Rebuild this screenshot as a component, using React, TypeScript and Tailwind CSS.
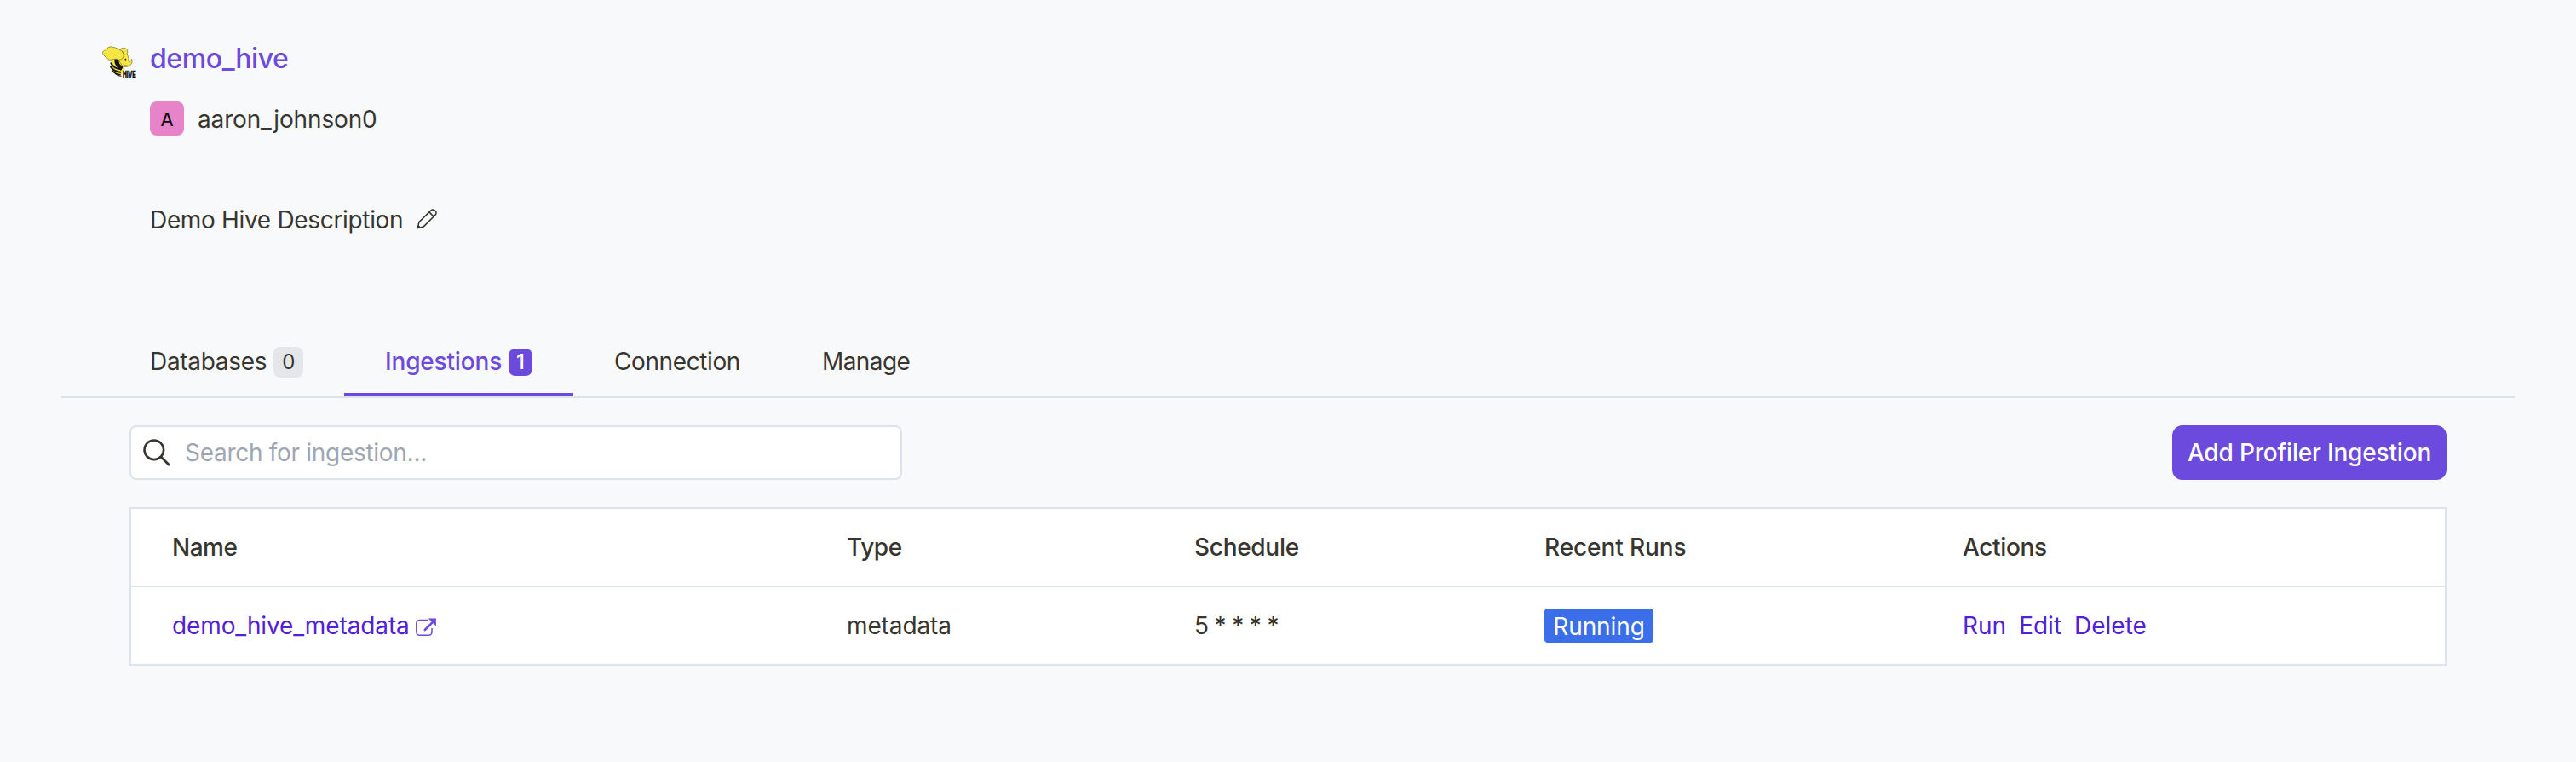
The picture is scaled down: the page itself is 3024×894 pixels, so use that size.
import React from "react";

function HiveLogo() {
  return (
    <svg viewBox="0 0 120 120" className="block h-10 w-10 overflow-visible" aria-hidden="true">
      <path d="M30 62C30 84 44 100 66 104L76 82 60 48 36 46C31 50 30 56 30 62Z" fill="#f5e642" />
      <g fill="none" stroke="#17160f" strokeLinecap="round">
        <path d="M31 61c7 13 18 20 35 21" strokeWidth="6" />
        <path d="M30 73c8 12 18 18 34 19" strokeWidth="6" />
        <path d="M35 86c7 9 16 14 28 15" strokeWidth="5" />
        <path d="M46 98c6 5 12 7 20 8" strokeWidth="3" />
      </g>
      <path d="M44 44 60 46c-4 12 2 22 14 28l-8 12C50 74 40 62 44 44Z" fill="#17160f" />
      <path d="M63 14c2-9 20-9 25-1 3 6-1 11 1 18 2 6 5 10 4 18 1 5 3 7 5 6 4-2 5-6 6-9 3 9 1 18-7 23-6 4-14 5-19 4-6-1-10-5-12-11C60 56 58 48 58 42Z" fill="#f5e642" stroke="#6b662e" strokeWidth="2" />
      <path d="M2 26C0 19 7 15 14 14 17 6 25 1 34 3c14 2 24 8 34 14 8 5 10 14 6 22-3 8-10 11-18 9-8-3-13-3-21 0-8 2-14 1-17-5C12 38 4 35 2 26Z" fill="#f5e642" stroke="#6b662e" strokeWidth="2" />
      <path d="M70 18c2 8 6 12 13 13" fill="none" stroke="#6b662e" strokeWidth="2" />
      <circle cx="82" cy="47" r="2.6" fill="#17160f" />
      <path d="M74 64c4 5 10 6 15 4" fill="none" stroke="#6b662e" strokeWidth="2" />
      <text
        x="72"
        y="110"
        textLength="47"
        lengthAdjust="spacingAndGlyphs"
        fontFamily="Liberation Sans, sans-serif"
        fontWeight="700"
        fontSize="34"
        fill="#0d0d0a"
        stroke="#0d0d0a"
        strokeWidth="2"
      >
        HIVE
      </text>
    </svg>
  );
}

function PencilIcon() {
  return (
    <svg viewBox="0 0 24 24" className="-mt-0.5 block h-6 w-6" fill="none" stroke="#37352f" strokeWidth="1.5" strokeLinejoin="round" aria-hidden="true">
      <path d="M1.4 22.6 2.9 15.6 16.9 1.9a3.2 3.2 0 0 1 4.6 0l.6.6a3.2 3.2 0 0 1 0 4.6L8.3 20.9Z" />
      <path d="M14.9 3.9l5.2 5.2" />
      <path d="M1.4 22.6 2 19.9 4 21.9Z" fill="#37352f" />
    </svg>
  );
}

function SearchIcon() {
  return (
    <svg viewBox="0 0 32 32" className="block h-8 w-8" fill="none" stroke="#37352f" strokeWidth="2.6" aria-hidden="true">
      <circle cx="12.8" cy="12.8" r="11.3" />
      <path d="M20.8 20.8 31 31" strokeWidth="2.8" />
    </svg>
  );
}

function ExternalIcon() {
  return (
    <svg viewBox="0 0 24 22" className="mt-[3px] block h-[22px] w-6" aria-hidden="true">
      <path
        d="M14 2.4H4.6A3.8 3.8 0 0 0 .8 6.2v10.3a3.8 3.8 0 0 0 3.8 3.8h10.6a3.8 3.8 0 0 0 3.8-3.8V12"
        fill="none"
        stroke="#6b4add"
        strokeWidth="1.5"
      />
      <path d="M10.8 14 20 4.8" stroke="#6b4add" strokeWidth="2.6" strokeLinecap="round" />
      <path d="M15.4 .8h8.4v8.4Z" fill="#6b4add" stroke="#6b4add" strokeWidth=".6" strokeLinejoin="round" />
    </svg>
  );
}

const ROW = "box-content grid h-[90px] grid-cols-[792px_408px_411px_491px_1fr] items-center pl-12";

export default function App() {
  return (
    <div className="h-[894px] w-full overflow-hidden bg-[#f8f9fb] px-[72px] font-['Inter',sans-serif] text-[28px] leading-10 text-[#37352f]">
      <header className="flex flex-col pl-12">
        <div className="flex h-[94px] items-start gap-4 pt-[49px]">
          <div className="pt-[5px]">
            <HiveLogo />
          </div>
          <h1 className="text-[32px] leading-10 font-medium tracking-[-0.41px] text-[#6b4add]">demo_hive</h1>
        </div>
        <div className="mt-[25px] flex h-10 items-center gap-4 pl-14">
          <div className="flex h-10 w-10 items-center justify-center rounded-lg bg-[#e783c9] text-[22px] text-black">
            <span className="pt-px">A</span>
          </div>
          <span className="pt-0.5 tracking-[-0.16px]">aaron_johnson0</span>
        </div>
        <div className="mt-[79px] flex h-10 items-center gap-4 pl-14">
          <span className="tracking-[-0.33px]">Demo Hive Description</span>
          <PencilIcon />
        </div>
      </header>

      <nav className="mt-[105px] flex h-[84px] border-b-2 border-[#dce3ec] pl-14">
        <div className="flex h-[82px] w-[276px] items-center gap-2 pl-12">
          <span className="tracking-[-0.3px]">Databases</span>
          <span className="mt-0.5 flex h-9 w-[35px] items-center justify-center rounded-lg bg-[#e5e6ea] text-2xl">0</span>
        </div>
        <div className="flex h-[82px] w-[269px] items-center gap-2 border-b-4 border-[#6b4add] pt-1 pl-12 text-[#6b4add]">
          <span className="font-medium tracking-[-0.17px]">Ingestions</span>
          <span className="mt-0.5 flex h-8 w-7 items-center justify-center rounded-lg bg-[#6b4add] text-2xl font-medium text-white">1</span>
        </div>
        <div className="flex h-[82px] w-[244px] items-center pl-12 tracking-[-0.4px]">Connection</div>
        <div className="flex h-[82px] items-center pl-12 tracking-[-0.6px]">Manage</div>
      </nav>

      <main className="px-20 pt-8">
        <div className="flex items-center justify-between">
          <div className="flex h-16 w-[907px] items-center gap-[17px] rounded-lg border-2 border-[#dce3ec] bg-white pl-[14px]">
            <SearchIcon />
            <span className="tracking-[-0.29px] text-[#9fa6b3]">Search for ingestion...</span>
          </div>
          <button className="flex h-16 w-[322px] items-center justify-center rounded-xl bg-[#6b4add] font-medium tracking-[-0.18px] whitespace-nowrap text-white">
            Add Profiler Ingestion
          </button>
        </div>

        <div className="mt-8 border-2 border-[#dce3ec] bg-white">
          <div className={`${ROW} font-medium`}>
            <span className="tracking-[-0.5px]">Name</span>
            <span className="tracking-[-0.4px]">Type</span>
            <span className="tracking-[-0.3px]">Schedule</span>
            <span className="tracking-[-0.1px]">Recent Runs</span>
            <span className="tracking-[-0.35px]">Actions</span>
          </div>
          <div className={`${ROW} border-t-2 border-[#dce3ec]`}>
            <span className="flex items-center gap-[7px] tracking-[-0.12px] text-[#5120d8]">
              demo_hive_metadata
              <ExternalIcon />
            </span>
            <span className="tracking-[-0.12px]">metadata</span>
            <span className="tracking-[-0.65px]">5 * * * *</span>
            <span className="flex">
              <span className="flex h-10 w-32 items-center justify-center rounded bg-[#3b6ee9] pt-0.5 tracking-[-0.1px] text-white">Running</span>
            </span>
            <span className="flex gap-[15px] text-[#5120d8]">
              <span>Run</span>
              <span>Edit</span>
              <span>Delete</span>
            </span>
          </div>
        </div>
      </main>
    </div>
  );
}
